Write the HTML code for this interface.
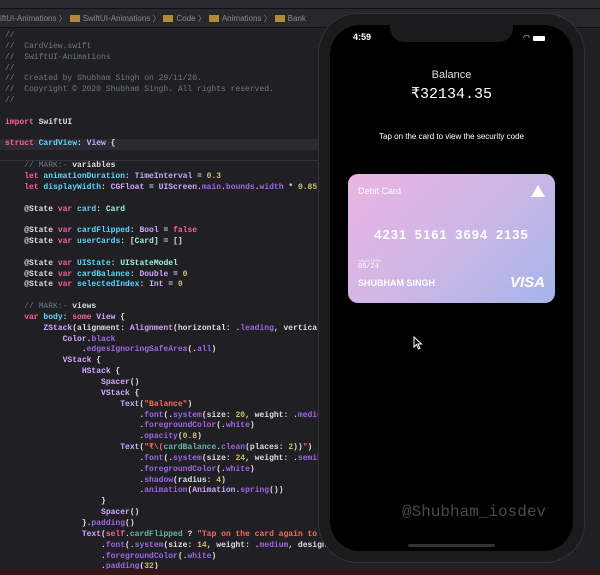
<!DOCTYPE html>
<html><head><meta charset="utf-8"><style>
*{margin:0;padding:0;box-sizing:border-box}
body{width:600px;height:575px;background:#1f1f24;overflow:hidden;position:relative;font-family:"Liberation Sans",sans-serif}
.tabs{position:absolute;left:0;top:0;width:600px;height:9px;background:#2a2a2e;border-bottom:1px solid #111}
.crumb{position:absolute;left:0;top:9px;width:600px;height:19px;background:#28282c;border-bottom:1px solid #111;color:#8a8a8e;font-size:8px;line-height:19px;white-space:nowrap}
.crumb b{display:inline-block;width:10px;height:7px;background:#b08a3a;margin:0 3px;vertical-align:-1px;font-weight:normal}
.code{position:absolute;left:5px;top:31px;font-family:"Liberation Mono",monospace;font-size:8px;line-height:10.84px;color:#dfdfe0;white-space:pre;font-weight:bold}
.hl{position:absolute;left:0;top:139px;width:330px;height:11px;background:#2b2b31}
.sep{position:absolute;left:0;top:160px;width:330px;height:1px;background:#34343a}
.c{color:#6c7986;font-weight:normal}.k{color:#fc5fa3}.t{color:#5dd8ff}.p{color:#d0a8ff}.g{color:#9ef1dd}.v{color:#67b7a4}.n{color:#d0bf69}.s{color:#fc6a5d}.m{color:#a167e6}
.phone{position:absolute;left:318px;top:13px;width:267px;height:550px;background:#1b1b1d;border:1px solid #333;border-radius:40px}
.screen{position:absolute;left:330px;top:25px;width:243px;height:526px;background:#000;border-radius:30px;overflow:hidden}
.notch{position:absolute;left:60px;top:0;width:123px;height:17px;background:#1b1b1d;border-radius:0 0 14px 14px}
.w{color:#fff;position:absolute;text-align:center;width:243px;left:0}
.card{position:absolute;left:18px;top:149px;width:207px;height:129px;border-radius:10px;background:linear-gradient(135deg,#eab4e2 0%,#d2b6e6 45%,#a5b5e8 100%);color:#fff}
.bottom{position:absolute;left:0;top:569px;width:600px;height:6px;background:#3a1518}
</style></head><body>
<div class="tabs"></div>
<div class="crumb">iftUI-Animations 〉<b></b>SwiftUI-Animations 〉<b></b>Code 〉<b></b>Animations 〉<b></b>Bank</div>
<div class="hl"></div><div class="sep"></div>
<div class="code"><span class="c">//
//  CardView.swift
//  SwiftUI-Animations
//
//  Created by Shubham Singh on 29/11/20.
//  Copyright © 2020 Shubham Singh. All rights reserved.
//</span>

<span class="k">import</span> SwiftUI

<span class="k">struct</span> <span class="t">CardView</span>: <span class="p">View</span> {

    <span class="c">// MARK:- </span>variables
    <span class="k">let</span> <span class="t">animationDuration</span>: <span class="p">TimeInterval</span> = <span class="n">0.3</span>
    <span class="k">let</span> <span class="t">displayWidth</span>: <span class="p">CGFloat</span> = <span class="p">UIScreen</span>.<span class="m">main</span>.<span class="m">bounds</span>.<span class="m">width</span> * <span class="n">0.85</span>

    @State <span class="k">var</span> <span class="t">card</span>: <span class="g">Card</span>

    @State <span class="k">var</span> <span class="t">cardFlipped</span>: <span class="p">Bool</span> = <span class="k">false</span>
    @State <span class="k">var</span> <span class="t">userCards</span>: [<span class="g">Card</span>] = []

    @State <span class="k">var</span> <span class="t">UIState</span>: <span class="g">UIStateModel</span>
    @State <span class="k">var</span> <span class="t">cardBalance</span>: <span class="p">Double</span> = <span class="n">0</span>
    @State <span class="k">var</span> <span class="t">selectedIndex</span>: <span class="p">Int</span> = <span class="n">0</span>

    <span class="c">// MARK:- </span>views
    <span class="k">var</span> <span class="t">body</span>: <span class="k">some</span> <span class="p">View</span> {
        <span class="p">ZStack</span>(alignment: <span class="p">Alignment</span>(horizontal: .<span class="m">leading</span>, vertical
            <span class="p">Color</span>.<span class="m">black</span>
                .<span class="m">edgesIgnoringSafeArea</span>(.<span class="m">all</span>)
            <span class="p">VStack</span> {
                <span class="p">HStack</span> {
                    <span class="p">Spacer</span>()
                    <span class="p">VStack</span> {
                        <span class="p">Text</span>(<span class="s">"Balance"</span>)
                            .<span class="m">font</span>(.<span class="m">system</span>(size: <span class="n">20</span>, weight: .<span class="m">mediu</span>
                            .<span class="m">foregroundColor</span>(.<span class="m">white</span>)
                            .<span class="m">opacity</span>(<span class="n">0.8</span>)
                        <span class="p">Text</span>(<span class="s">"₹\(</span><span class="v">cardBalance</span>.<span class="m">clean</span>(places: <span class="n">2</span>))<span class="s">"</span>)
                            .<span class="m">font</span>(.<span class="m">system</span>(size: <span class="n">24</span>, weight: .<span class="m">semib</span>
                            .<span class="m">foregroundColor</span>(.<span class="m">white</span>)
                            .<span class="m">shadow</span>(radius: <span class="n">4</span>)
                            .<span class="m">animation</span>(<span class="p">Animation</span>.<span class="m">spring</span>())
                    }
                    <span class="p">Spacer</span>()
                }.<span class="m">padding</span>()
                <span class="p">Text</span>(<span class="k">self</span>.<span class="v">cardFlipped</span> ? <span class="s">"Tap on the card again to</span>
                    .<span class="m">font</span>(.<span class="m">system</span>(size: <span class="n">14</span>, weight: .<span class="m">medium</span>, design
                    .<span class="m">foregroundColor</span>(.<span class="m">white</span>)
                    .<span class="m">padding</span>(<span class="n">32</span>)</div>
<div class="phone"></div>
<div class="screen">
  <div class="notch"></div>
  <div style="position:absolute;left:23px;top:7px;color:#fff;font-size:9px;font-weight:bold">4:59</div>
  <div style="position:absolute;left:203px;top:11px;width:12px;height:5px;background:#fff;border-radius:1px"></div>
  <div style="position:absolute;left:193px;top:8px;color:#fff;font-size:8px">◠</div>
  <div class="w" style="top:44px;font-size:11px;color:#ddd">Balance</div>
  <div class="w" style="top:59px;font-size:15px;font-family:'Liberation Mono',monospace">₹32134.35</div>
  <div class="w" style="top:107px;font-size:8px">Tap on the card to view the security code</div>
  <div class="card">
    <div style="position:absolute;left:10px;top:12px;font-size:9px">Debit Card</div>
    <div style="position:absolute;right:10px;top:11px;width:0;height:0;border-left:7px solid transparent;border-right:7px solid transparent;border-bottom:12px solid #fff"></div>
    <div style="position:absolute;left:0;width:207px;text-align:center;top:53px;font-size:13px;font-weight:bold;letter-spacing:1px;word-spacing:3px">4231 5161 3694 2135</div>
    <div style="position:absolute;left:10px;top:84px;font-size:4px;opacity:.8">VALID THRU</div>
    <div style="position:absolute;left:10px;top:89px;font-size:7px;font-family:'Liberation Mono',monospace">05/24</div>
    <div style="position:absolute;left:10px;top:104px;font-size:9px;font-weight:bold">SHUBHAM SINGH</div>
    <div style="position:absolute;right:10px;top:100px;font-size:15px;font-weight:bold;font-style:italic">VISA</div>
  </div>
  <svg style="position:absolute;left:83px;top:311px" width="10" height="14" viewBox="0 0 10 14"><path d="M1 1 L1 11 L3.5 8.5 L5.5 13 L7 12.3 L5 8 L8.5 8 Z" fill="#000" stroke="#fff" stroke-width="1"/></svg>
  <div style="position:absolute;left:72px;top:478px;color:#4a4a4a;font-size:16px;font-family:'Liberation Mono',monospace">@Shubham_iosdev</div>
  <div style="position:absolute;left:78px;top:519px;width:87px;height:3px;background:#333;border-radius:2px"></div>
</div>
<div class="bottom"></div>
</body></html>
